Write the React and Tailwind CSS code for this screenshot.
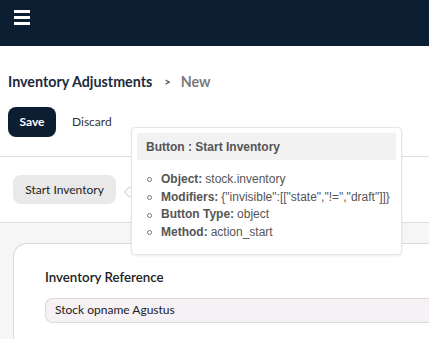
import React from "react";

export default function App() {
  return (
    <div className="relative w-[429px] h-[339px] overflow-hidden bg-white font-['Lato',sans-serif]">
      <div className="h-[46px] bg-[#0b1e32] flex items-start pl-[14px] pt-[10px]">
        <div className="flex flex-col gap-[3px]">
          <div className="w-[16px] h-[3px] bg-white" />
          <div className="w-[16px] h-[3px] bg-white" />
          <div className="w-[16px] h-[3px] bg-white" />
        </div>
      </div>
      <div className="px-[8px] pt-[27px] flex items-center h-[45px]">
        <span className="text-[14.3px] font-bold text-[#1c2a3b]">Inventory Adjustments</span>
        <span className="ml-[12px] text-[11px] font-bold text-[#555]">&gt;</span>
        <span className="ml-[10px] text-[14.3px] font-bold text-[#7a7a7a]">New</span>
      </div>
      <div className="px-[8px] pt-[16px] flex items-center gap-[16px] h-[46px]">
        <div className="h-[30px] w-[48px] rounded-[8px] bg-[#0b1e32] text-white text-[12px] font-bold flex items-center justify-center">Save</div>
        <span className="text-[12px] text-[#333]">Discard</span>
      </div>
      <div className="mt-[19px] border-t border-b border-[#dedede] h-[67px] flex items-center pl-[13px]">
        <div className="h-[29px] w-[103px] rounded-[8px] bg-[#e9e9e9] text-[12px] text-[#222] flex items-center justify-center">Start Inventory</div>
      </div>
      <div className="bg-[#f6f6f6] h-[200px] pt-[20px] pl-[13px]">
        <div className="bg-white border border-[#d9d9d9] rounded-tl-[14px] border-r-0 h-[200px] pl-[31px] pt-[24px]">
          <div className="text-[13.3px] font-semibold text-[#222]">Inventory Reference</div>
          <div className="mt-[10px] h-[25px] rounded-l-[8px] border border-r-0 border-[#dcd8dc] bg-[#f5f1f4] pl-[9px] flex items-center text-[12px] text-[#222]">Stock opname Agustus</div>
        </div>
      </div>

      <div className="absolute left-[131px] top-[127px] w-[271px] h-[128px] bg-white border border-[#e6e6e6] rounded-[4px] shadow-[0_1px_3px_rgba(0,0,0,0.08)] p-[5px] font-['Liberation_Sans',Arial,sans-serif]">
        <div className="h-[27px] bg-[#f2f2f2] flex items-center pl-[9px] text-[12px] font-bold text-[#555]">Button : Start Inventory</div>
        <ul className="mt-[11px] pl-[9px] text-[12px] text-[#555] leading-[17.7px] whitespace-nowrap">
          {[
            ["Object:", "stock.inventory"],
            ["Modifiers:", '{"invisible":[["state","!=","draft"]]}'],
            ["Button Type:", "object"],
            ["Method:", "action_start"],
          ].map(([k, v]) => (
            <li key={k} className="flex items-center">
              <span className="w-[5px] h-[5px] rounded-full border border-[#777] mr-[9px] ml-[1px] shrink-0" />
              <span className="font-bold">{k}</span>
              <span className="ml-[3px]">{v}</span>
            </li>
          ))}
        </ul>
      </div>
      <svg className="absolute left-[123px] top-[186px]" width="8" height="12" viewBox="0 0 8 12">
        <path d="M7 0.5 L1.5 6 L7 11.5" fill="none" stroke="#bbb" strokeWidth="1" />
      </svg>
    </div>
  );
}
